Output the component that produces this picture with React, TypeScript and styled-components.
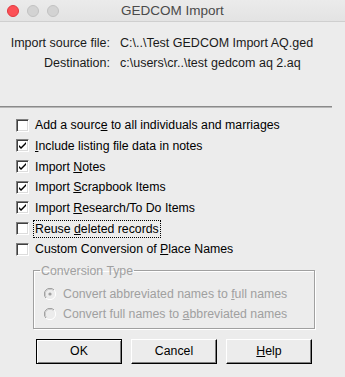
import React from "react";
import styled, { createGlobalStyle } from "styled-components";

const Global = createGlobalStyle`
  html, body { margin: 0; padding: 0; background: #ececec; }
  body { font-family: "Liberation Sans", Arial, sans-serif; }
`;

const Window = styled.div`
  width: 345px;
  height: 377px;
  background: #ececec;
  display: flex;
  flex-direction: column;
  overflow: hidden;
`;

const TitleBar = styled.div`
  height: 22px;
  box-sizing: border-box;
  border-bottom: 1px solid #cfcfcf;
  background: linear-gradient(#ebebeb, #e3e3e3);
  display: flex;
  align-items: center;
  position: relative;
  padding-left: 7px;
  gap: 8px;
`;

const Light = styled.div<{ $c: string; $b: string }>`
  width: 12px;
  height: 12px;
  border-radius: 50%;
  background: ${(p) => p.$c};
  box-sizing: border-box;
  border: 1px solid ${(p) => p.$b};
`;

const Title = styled.div`
  position: absolute;
  left: 0;
  right: 0;
  text-align: center;
  font-size: 13.5px;
  color: #4a4a4a;
  font-family: "Liberation Sans", Arial, sans-serif;
`;

const Info = styled.div`
  display: grid;
  grid-template-columns: 110px auto;
  column-gap: 10px;
  row-gap: 0;
  padding-top: 12px;
  font-size: 12.5px;
  color: #1a1a1a;
`;

const InfoLabel = styled.div`
  text-align: right;
  height: 20px;
  line-height: 18px;
  white-space: nowrap;
`;

const InfoValue = styled.div`
  height: 20px;
  line-height: 18px;
  white-space: nowrap;
`;

const Separator = styled.div`
  margin-top: 32px;
  width: 332px;
  height: 1px;
  background: #8a8a8a;
  border-bottom: 1px solid #b8b8b8;
`;

const Options = styled.div`
  display: flex;
  flex-direction: column;
  padding-top: 7px;
  padding-left: 16px;
`;

const Row = styled.div`
  height: 20.67px;
  display: flex;
  align-items: center;
  gap: 6px;
  font-size: 12.3px;
  color: #000;
`;

const Box = styled.div`
  width: 13px;
  height: 13px;
  box-sizing: border-box;
  background: #fff;
  border-top: 1px solid #808080;
  border-left: 1px solid #808080;
  border-right: 1px solid #fff;
  border-bottom: 1px solid #fff;
  box-shadow: inset 1px 1px 0 #404040, inset -1px -1px 0 #dcdcdc;
  display: flex;
  align-items: center;
  justify-content: center;
`;

const Label = styled.span<{ $focus?: boolean }>`
  padding: 1px 1px;
  border: 1px dotted ${(p) => (p.$focus ? "#000" : "transparent")};
  margin-left: -2px;
  white-space: nowrap;
`;

const U = styled.span`
  text-decoration: underline;
  text-underline-offset: 1px;
`;

const Group = styled.fieldset`
  margin: 5px 0 0 33px;
  width: 282px;
  height: 64px;
  box-sizing: border-box;
  border: 1px solid #a0a0a0;
  box-shadow: 1px 1px 0 #fff, inset 1px 1px 0 #fff;
  padding: 7px 0 0 10px;
  display: flex;
  flex-direction: column;
`;

const Legend = styled.legend`
  padding: 0 1px;
  margin-left: -4px;
  font-size: 12.3px;
  color: #a0a0a0;
  line-height: 12px;
`;

const RadioRow = styled.div`
  height: 20px;
  display: flex;
  align-items: center;
  gap: 7px;
  font-size: 12.3px;
  color: #a0a0a0;
  white-space: nowrap;
`;

const Buttons = styled.div`
  display: flex;
  gap: 9px;
  margin: 10px 0 0 36px;
`;

const Button = styled.button<{ $def?: boolean }>`
  width: 86px;
  height: 25px;
  box-sizing: border-box;
  font-family: "Liberation Sans", Arial, sans-serif;
  font-size: 12.3px;
  color: #000;
  background: #ececec;
  padding: 0;
  border: 1px solid ${(p) => (p.$def ? "#000" : "#fff")};
  border-right-color: #000;
  border-bottom-color: #000;
  box-shadow: ${(p) =>
    p.$def
      ? "inset 1px 1px 0 #fff, inset -1px -1px 0 #808080"
      : "inset -1px -1px 0 #808080"};
`;

const Check = () => (
  <svg width="9" height="9" viewBox="0 0 9 9">
    <path d="M1 4 L3 6 L8 1 L8 3 L3 8 L1 6 Z" fill="#000" />
  </svg>
);

const Radio = ({ on }: { on?: boolean }) => (
  <svg width="12" height="12" viewBox="0 0 12 12">
    <path d="M10 2 A5.5 5.5 0 0 0 2 10" stroke="#9a9a9a" fill="none" />
    <path d="M9.3 2.7 A4.5 4.5 0 0 0 2.7 9.3" stroke="#c8c8c8" fill="none" />
    <path d="M2 10 A5.5 5.5 0 0 0 10 2" stroke="#fff" fill="none" />
    <circle cx="6" cy="6" r="4" fill="#ececec" />
    {on && <circle cx="6" cy="6" r="1.6" fill="#a0a0a0" />}
  </svg>
);

const CheckRow = ({
  checked,
  focus,
  children,
}: {
  checked?: boolean;
  focus?: boolean;
  children: React.ReactNode;
}) => (
  <Row>
    <Box>{checked && <Check />}</Box>
    <Label $focus={focus}>{children}</Label>
  </Row>
);

export default function App() {
  return (
    <Window>
      <Global />
      <TitleBar>
        <Light $c="#fc5056" $b="#e0393f" />
        <Light $c="#d3d3d3" $b="#c2c2c2" />
        <Light $c="#d3d3d3" $b="#c2c2c2" />
        <Title>GEDCOM Import</Title>
      </TitleBar>
      <Info>
        <InfoLabel>Import source file:</InfoLabel>
        <InfoValue>C:\..\Test GEDCOM Import AQ.ged</InfoValue>
        <InfoLabel>Destination:</InfoLabel>
        <InfoValue>c:\users\cr..\test gedcom aq 2.aq</InfoValue>
      </Info>
      <Separator />
      <Options>
        <CheckRow>
          Add a sourc<U>e</U> to all individuals and marriages
        </CheckRow>
        <CheckRow checked>
          <U>I</U>nclude listing file data in notes
        </CheckRow>
        <CheckRow checked>
          Import <U>N</U>otes
        </CheckRow>
        <CheckRow checked>
          Import <U>S</U>crapbook Items
        </CheckRow>
        <CheckRow checked>
          Import <U>R</U>esearch/To Do Items
        </CheckRow>
        <CheckRow focus>
          Reuse <U>d</U>eleted records
        </CheckRow>
        <CheckRow>
          Custom Conversion of <U>P</U>lace Names
        </CheckRow>
      </Options>
      <Group>
        <Legend>Conversion Type</Legend>
        <RadioRow>
          <Radio on />
          <span>
            Convert abbreviated names to <U>f</U>ull names
          </span>
        </RadioRow>
        <RadioRow>
          <Radio />
          <span>
            Convert full names to <U>a</U>bbreviated names
          </span>
        </RadioRow>
      </Group>
      <Buttons>
        <Button $def>OK</Button>
        <Button>Cancel</Button>
        <Button>
          <U>H</U>elp
        </Button>
      </Buttons>
    </Window>
  );
}
